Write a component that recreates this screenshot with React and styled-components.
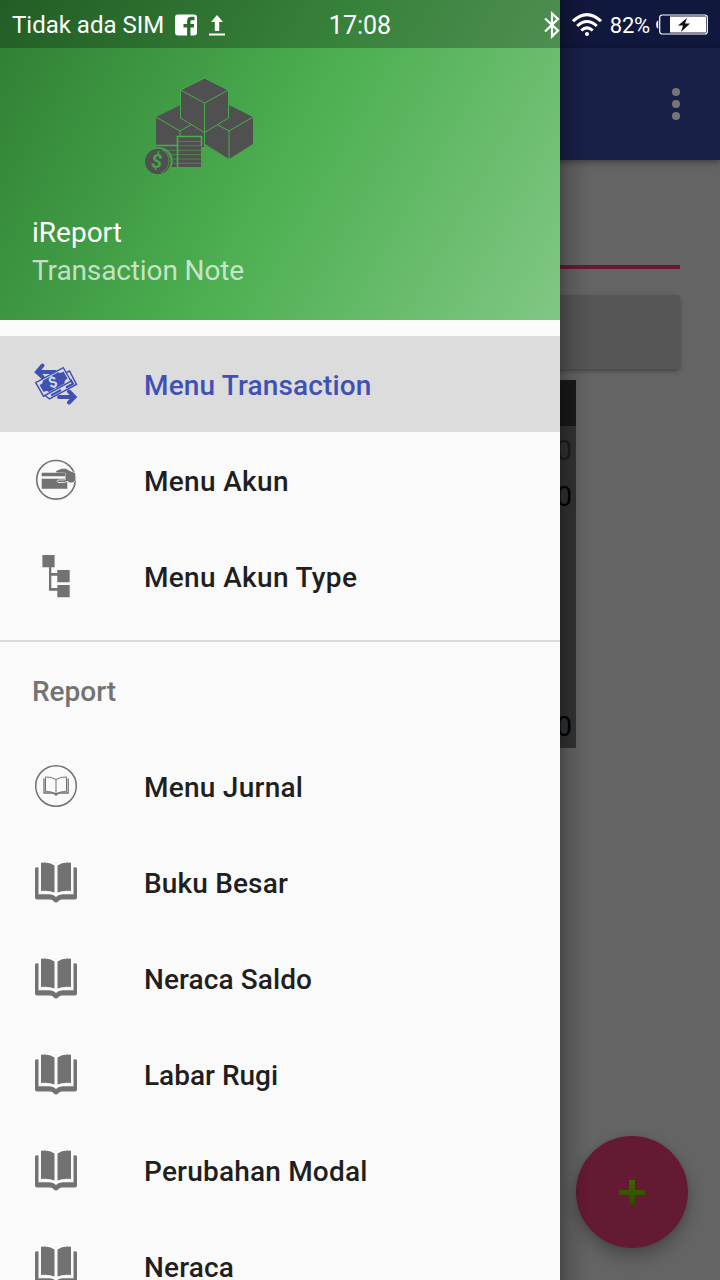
import React from "react";
import styled, { createGlobalStyle } from "styled-components";

const GlobalStyle = createGlobalStyle`
  * { box-sizing: border-box; }
  html, body { margin: 0; padding: 0; }
  body { font-family: Roboto, "Noto Sans", sans-serif; overflow: hidden; }
  svg { display: block; flex: none; }
`;

const Screen = styled.div`
  position: relative;
  width: 720px;
  height: 1280px;
  overflow: hidden;
  background: #646464;
`;

/* dimmed page behind the drawer */
const Page = styled.div`
  display: flex;
  flex-direction: column;
  height: 100%;
`;

const StatusBackdrop = styled.div`
  height: 48px;
  background: #11183d;
`;

const Toolbar = styled.header`
  display: flex;
  align-items: center;
  justify-content: flex-end;
  height: 112px;
  padding-right: 40px;
  background: #192048;
  box-shadow: 0 2px 7px rgba(0, 0, 0, 0.4);
`;

const Overflow = styled.div`
  display: flex;
  flex-direction: column;
  gap: 4px;
`;

const Dot = styled.span`
  width: 8px;
  height: 8px;
  border-radius: 50%;
  background: #757575;
`;

const Content = styled.main`
  display: flex;
  flex-direction: column;
  padding: 105px 40px 0;
`;

const Underline = styled.div`
  height: 4px;
  background: #661a34;
`;

const GrayButton = styled.div`
  height: 74px;
  margin-top: 26px;
  border-radius: 4px;
  background: #565656;
  box-shadow: 0 2px 4px rgba(0, 0, 0, 0.3);
`;

const Table = styled.div`
  width: 536px;
  margin-top: 11px;
  background: #333333;
`;

const TableRow = styled.div`
  display: flex;
  justify-content: flex-end;
  height: 46px;
  padding: 2px 4px 0 0;
  font-size: 28px;
  line-height: 46px;
  background: ${(p) => (p.$head ? "#191919" : "transparent")};
  color: ${(p) => (p.$muted ? "#1b1b1b" : "#000")};
`;

const Fab = styled.div`
  position: absolute;
  right: 32px;
  bottom: 32px;
  display: flex;
  align-items: center;
  justify-content: center;
  width: 112px;
  height: 112px;
  border-radius: 50%;
  background: #641a33;
  box-shadow: 0 9px 16px rgba(0, 0, 0, 0.25), 0 0 6px rgba(0, 0, 0, 0.1);
`;

const Drawer = styled.aside`
  position: absolute;
  top: 0;
  left: 0;
  width: 560px;
  height: 1280px;
  overflow: hidden;
  background: #fafafa;
`;

const DrawerShadow = styled.div`
  position: absolute;
  top: 0;
  left: 560px;
  width: 30px;
  height: 1280px;
  background: linear-gradient(to right, rgba(0, 0, 0, 0.28), rgba(0, 0, 0, 0.12) 35%, transparent);
`;

const DrawerHeader = styled.div`
  display: flex;
  flex-direction: column;
  height: 320px;
  padding: 76px 32px 0;
  background: linear-gradient(119.74deg, #2e7d32, #4caf50 50%, #81c784);
`;

const LogoWrap = styled.div`
  padding-left: 113px;
`;

const AppName = styled.div`
  margin-top: 40px;
  font-size: 28px;
  line-height: 33px;
  color: #fff;
`;

const Tagline = styled.div`
  margin-top: 5px;
  font-size: 28px;
  line-height: 33px;
  letter-spacing: -0.12px;
  color: rgba(255, 255, 255, 0.7);
`;

const MenuGroup = styled.nav`
  padding: 16px 0;
  border-bottom: 2px solid #dadada;
`;

const ReportGroup = styled.nav`
  display: flex;
  flex-direction: column;
`;

const MenuRow = styled.div`
  display: flex;
  align-items: center;
  gap: 64px;
  height: 96px;
  padding: 0 32px;
  background: ${(p) => (p.$active ? "#dcdcdc" : "transparent")};
  color: ${(p) => (p.$active ? "#3f51b5" : "#1f1f1f")};
`;

const MenuLabel = styled.span`
  padding-top: 2px;
  font-size: 28px;
  font-weight: 500;
  line-height: 33px;
  letter-spacing: ${(p) => p.$tracking || 0}px;
`;

const IconBox = styled.svg`
  color: ${(p) => (p.$active ? "#3f51b5" : "#727272")};
`;

const GroupTitle = styled.div`
  height: 96px;
  padding: 1px 32px 0;
  font-size: 28px;
  font-weight: 500;
  line-height: 97px;
  color: #737373;
`;

const StatusBar = styled.div`
  position: absolute;
  top: 0;
  left: 0;
  display: grid;
  grid-template-columns: 1fr auto 1fr;
  align-items: center;
  width: 720px;
  height: 48px;
  padding: 0 12px;
  color: #fff;
`;

const StatusTint = styled.div`
  position: absolute;
  top: 0;
  left: 0;
  width: 560px;
  height: 48px;
  background: rgba(0, 0, 0, 0.25);
`;

const StatusSide = styled.div`
  display: flex;
  align-items: center;
  justify-content: ${(p) => (p.$end ? "flex-end" : "flex-start")};
`;

const Carrier = styled.span`
  margin-right: 11px;
  font-size: 24px;
  line-height: 48px;
`;

const Clock = styled.span`
  font-size: 25px;
  line-height: 48px;
  padding-top: 2px;
`;

const Percent = styled.span`
  margin: 0 6px 0 8px;
  padding-top: 2px;
  font-size: 22px;
  line-height: 48px;
  letter-spacing: -0.2px;
`;

const UploadWrap = styled.span`
  margin-left: 12px;
`;

const WifiWrap = styled.span`
  margin-left: 12px;
`;

function FacebookIcon() {
  return (
    <svg width="22" height="22" viewBox="0 0 22 22">
      <rect y="0.500" width="22" height="21" rx="3" fill="#fff" />
      <path d="M19.500 4.500h-3q-2.700 0-2.700 2.700V22M8.500 11.700h10.500" fill="none" stroke="#2a6a2f" strokeWidth="3.400" />
    </svg>
  );
}

function UploadIcon() {
  return (
    <svg width="16" height="21" viewBox="0 0 16 21" fill="#fff">
      <path d="M8 0 14 7H10.200V16H5.800V7H2ZM0 18.500h16v2H0z" />
    </svg>
  );
}

function BluetoothIcon() {
  return (
    <svg width="16" height="28" viewBox="0 0 16 28" fill="none" stroke="#fff" strokeWidth="2.200">
      <path d="M1 7.500 14 19.500 8 25.500V2.500L14 8 1 20.500" />
    </svg>
  );
}

function WifiIcon() {
  return (
    <svg width="30" height="24" viewBox="0 0 30 24" fill="none" stroke="#fff" strokeWidth="3">
      <path d="M1 8.200Q15-5 29 8.200M5.200 13Q15 4 24.800 13M9.300 17.500Q15 12.300 20.700 17.500" />
      <circle cx="15" cy="21" r="2" fill="#fff" stroke="none" />
    </svg>
  );
}

function BatteryIcon() {
  return (
    <svg width="52" height="22" viewBox="0 0 52 22">
      <path d="M2.200 7Q.8 7 .8 9v3.500Q.8 14 2.200 14" fill="#fff" stroke="#fff" strokeWidth="1" />
      <rect x="3.700" y="1" width="47.600" height="19" rx="2.500" fill="none" stroke="#fff" strokeWidth="1.200" />
      <rect x="14" y="2.500" width="36" height="16" fill="#fff" />
      <path d="M31 4 22 11.500h5l-2 6.500 9-8.500h-5z" fill="#111" />
    </svg>
  );
}

function CubesLogo() {
  return (
    <svg width="110" height="100" viewBox="0 0 110 100">
      <g fill="#505050" stroke="#4aab4e" strokeWidth="1" strokeLinejoin="round">
        <path d="M11 41 35.500 29 48 48 35.500 55Z" stroke="none" />
        <path d="M11 41 35 55V70H11Z" stroke="none" />
        <path d="M35 55 47 48 59 56V71H35Z" stroke="none" />
        <path d="M84 29 108 41 84 55 71 48Z" stroke="none" />
        <path d="M108 41V68L84 83 60 68V56L71 48 84 55Z" stroke="none" />
        <path d="M11 41 35 55V62M35 55 47 48M71 48 84 55V83M84 55 108 41" fill="none" />
        <path d="M59.500 2 83.500 14V42L59.500 56.500 35.500 42V14Z" />
        <path d="M35.500 14 59.500 27 83.500 14M59.500 27V70" fill="none" />
      </g>
      <path d="M11 69H32.500V60H56V91H11Z" fill="#505050" />
      <path d="M11 69.500H32.500M32.500 91V60.500H56.500V70" fill="none" stroke="#4aab4e" strokeWidth="1.700" />
      <path d="M33 65.500H56M33 69.800H56M11 74.300H56M11 78.600H56M11 83H56M11 87.300H56" stroke="#4aa64d" strokeWidth=".6" />
      <ellipse cx="14" cy="85" rx="13.800" ry="14" fill="#45a349" />
      <ellipse cx="12.800" cy="85.500" rx="12.800" ry="12.800" fill="#505050" />
      <path d="M17 74.500Q24 77 24 85T16 97" fill="none" stroke="#45a349" strokeWidth=".8" />
      <text x="11.500" y="92" textAnchor="middle" fontSize="20" fontWeight="700" fontStyle="italic" fill="#45a349">$</text>
    </svg>
  );
}

function TransactionIcon() {
  return (
    <IconBox $active width="48" height="48" viewBox="0 0 48 48" fill="none" stroke="currentColor">
      <g strokeWidth="4" strokeLinecap="round">
        <path d="M23 12H6M10.500 5.500 5 12l5.500 5" />
        <path d="M27 37H42M37 31.500 42.500 37 37 42.500" />
      </g>
      <path d="M13 35.500 17.500 38.800 44.500 24.500 37.500 11 31 14Z" fill="#dcdcdc" strokeWidth="1.500" />
      <path d="M19 35.500 29 30M34 27.500 41 23.800 38.500 19.500" strokeWidth="2.200" />
      <path d="M3.700 22.700 31.300 7.700 39 21.200 11.500 36.200Z" fill="#dcdcdc" strokeWidth="1.400" />
      <path d="M11 20.500 26 12.300Q28.500 14 31.500 11.500L35.500 18.500Q32 20.500 32.500 23.500L17 32Q14.500 30 11.500 32L7.500 25Q11 24 11 20.500Z" fill="currentColor" stroke="none" />
      <text x="21" y="27.500" textAnchor="middle" fontSize="15" fontWeight="700" fill="#dcdcdc" stroke="none" transform="rotate(-18 21 23)">$</text>
    </IconBox>
  );
}

function AkunIcon() {
  return (
    <IconBox width="48" height="48" viewBox="0 0 48 48" fill="currentColor">
      <circle cx="24" cy="23.800" r="19.300" fill="none" stroke="currentColor" strokeWidth="1.600" />
      <path d="M9.700 16.700H33V20.300H9.700ZM9.700 22.700H35.300V32.700H9.700Z" />
      <path d="M24 15Q29.500 11.600 34 12.600L38.500 15.200 43.200 16.800V25L40.500 26.800H37.500Q35.500 24 32.500 26.500H26Q24 25.700 26 24H32.800Q34 22.300 33.500 20.500V16.700L24.500 16.200Z" stroke="#fafafa" strokeWidth=".8" />
      <path d="M24 15.300Q29.500 12 34 13L38.500 15.600 43 17.200V24.800L40.500 26.300 37.500 26.300 33.500 22.500V16.700L24.500 16.500Z" />
    </IconBox>
  );
}

function TypeIcon() {
  return (
    <IconBox width="48" height="48" viewBox="0 0 48 48" fill="currentColor">
      <path d="M10.400 3h12.200v12.200H19.300V21h6v-3h12.400v12.200H25.300v-6.500h-6V36h6v-3h12.400v12.200H25.300v-6.500H17V15.200h-6.600z" />
    </IconBox>
  );
}

function JournalIcon() {
  return (
    <IconBox width="48" height="48" viewBox="0 -2 48 48" fill="none" stroke="currentColor">
      <circle cx="24" cy="22" r="20.300" strokeWidth="1.500" />
      <path d="M24 15.500Q19 12.500 13.500 13V27.500Q19 27 24 30Q29 27 34.500 27.500V13Q29 12.500 24 15.500V30" strokeWidth="1" />
      <path d="M12 14.500V29H20Q22.500 29 24 31Q25.500 29 28 29H36.200V14.500" strokeWidth="1.300" />
    </IconBox>
  );
}

function BookIcon() {
  return (
    <IconBox width="48" height="48" viewBox="0 -2 48 48" fill="currentColor">
      <path d="M9 2.800Q17 1.600 22.500 5.500V32.500Q17 30.200 9 31ZM39 2.800Q31 1.600 25.500 5.500V32.500Q31 30.200 39 31Z" />
      <path d="M3 8.500Q3 7.200 6.500 7.200V34.300H17.500Q21.500 34.300 24 37Q26.500 34.300 30.500 34.300H41.500V7.200Q45 7.200 45 8.500V37Q45 39.500 42.500 39.500H30Q27.500 39.500 26.500 41Q24 44 21.500 41Q20.500 39.500 18 39.500H5.500Q3 39.500 3 37Z" />
    </IconBox>
  );
}

const mainItems = [
  { label: "Menu Transaction", Icon: TransactionIcon, active: true, tracking: 0.14 },
  { label: "Menu Akun", Icon: AkunIcon, tracking: 0.32 },
  { label: "Menu Akun Type", Icon: TypeIcon, tracking: 0.32 },
];

const reportItems = [
  { label: "Menu Jurnal", Icon: JournalIcon, tracking: 0.25 },
  { label: "Buku Besar", Icon: BookIcon, tracking: 0.15 },
  { label: "Neraca Saldo", Icon: BookIcon, tracking: 0.1 },
  { label: "Labar Rugi", Icon: BookIcon },
  { label: "Perubahan Modal", Icon: BookIcon, tracking: 0.2 },
  { label: "Neraca", Icon: BookIcon, tracking: 0.15 },
];

function MenuItem({ label, Icon, active, tracking }) {
  return (
    <MenuRow $active={active}>
      <Icon />
      <MenuLabel $tracking={tracking}>{label}</MenuLabel>
    </MenuRow>
  );
}

export default function App() {
  return (
    <>
      <GlobalStyle />
      <Screen>
        <Page>
          <StatusBackdrop />
          <Toolbar>
            <Overflow>
              <Dot />
              <Dot />
              <Dot />
            </Overflow>
          </Toolbar>
          <Content>
            <Underline />
            <GrayButton />
            <Table>
              <TableRow $head />
              <TableRow $muted>0</TableRow>
              <TableRow>0</TableRow>
              <TableRow />
              <TableRow />
              <TableRow />
              <TableRow />
              <TableRow>0</TableRow>
            </Table>
          </Content>
        </Page>
        <Fab>
          <svg width="28" height="28" viewBox="0 0 28 28">
            <defs>
              <linearGradient id="plus" x1="0" y1="0" x2="0" y2="1">
                <stop offset="0" stopColor="#3f6400" />
                <stop offset="1" stopColor="#304700" />
              </linearGradient>
            </defs>
            <path d="M11 1h6v10h10v6H17v10h-6V17H1v-6h10z" fill="url(#plus)" />
            <path d="M11 1.500h6M1 11.500h10M17 11.500h10" stroke="#333d08" />
          </svg>
        </Fab>
        <DrawerShadow />
        <Drawer>
          <DrawerHeader>
            <LogoWrap>
              <CubesLogo />
            </LogoWrap>
            <AppName>iReport</AppName>
            <Tagline>Transaction Note</Tagline>
          </DrawerHeader>
          <MenuGroup>
            {mainItems.map((item) => (
              <MenuItem key={item.label} {...item} />
            ))}
          </MenuGroup>
          <ReportGroup>
            <GroupTitle>Report</GroupTitle>
            {reportItems.map((item) => (
              <MenuItem key={item.label} {...item} />
            ))}
          </ReportGroup>
        </Drawer>
        <StatusTint />
        <StatusBar>
          <StatusSide>
            <Carrier>Tidak ada SIM</Carrier>
            <FacebookIcon />
            <UploadWrap>
              <UploadIcon />
            </UploadWrap>
          </StatusSide>
          <Clock>17:08</Clock>
          <StatusSide $end>
            <BluetoothIcon />
            <WifiWrap>
              <WifiIcon />
            </WifiWrap>
            <Percent>82%</Percent>
            <BatteryIcon />
          </StatusSide>
        </StatusBar>
      </Screen>
    </>
  );
}
